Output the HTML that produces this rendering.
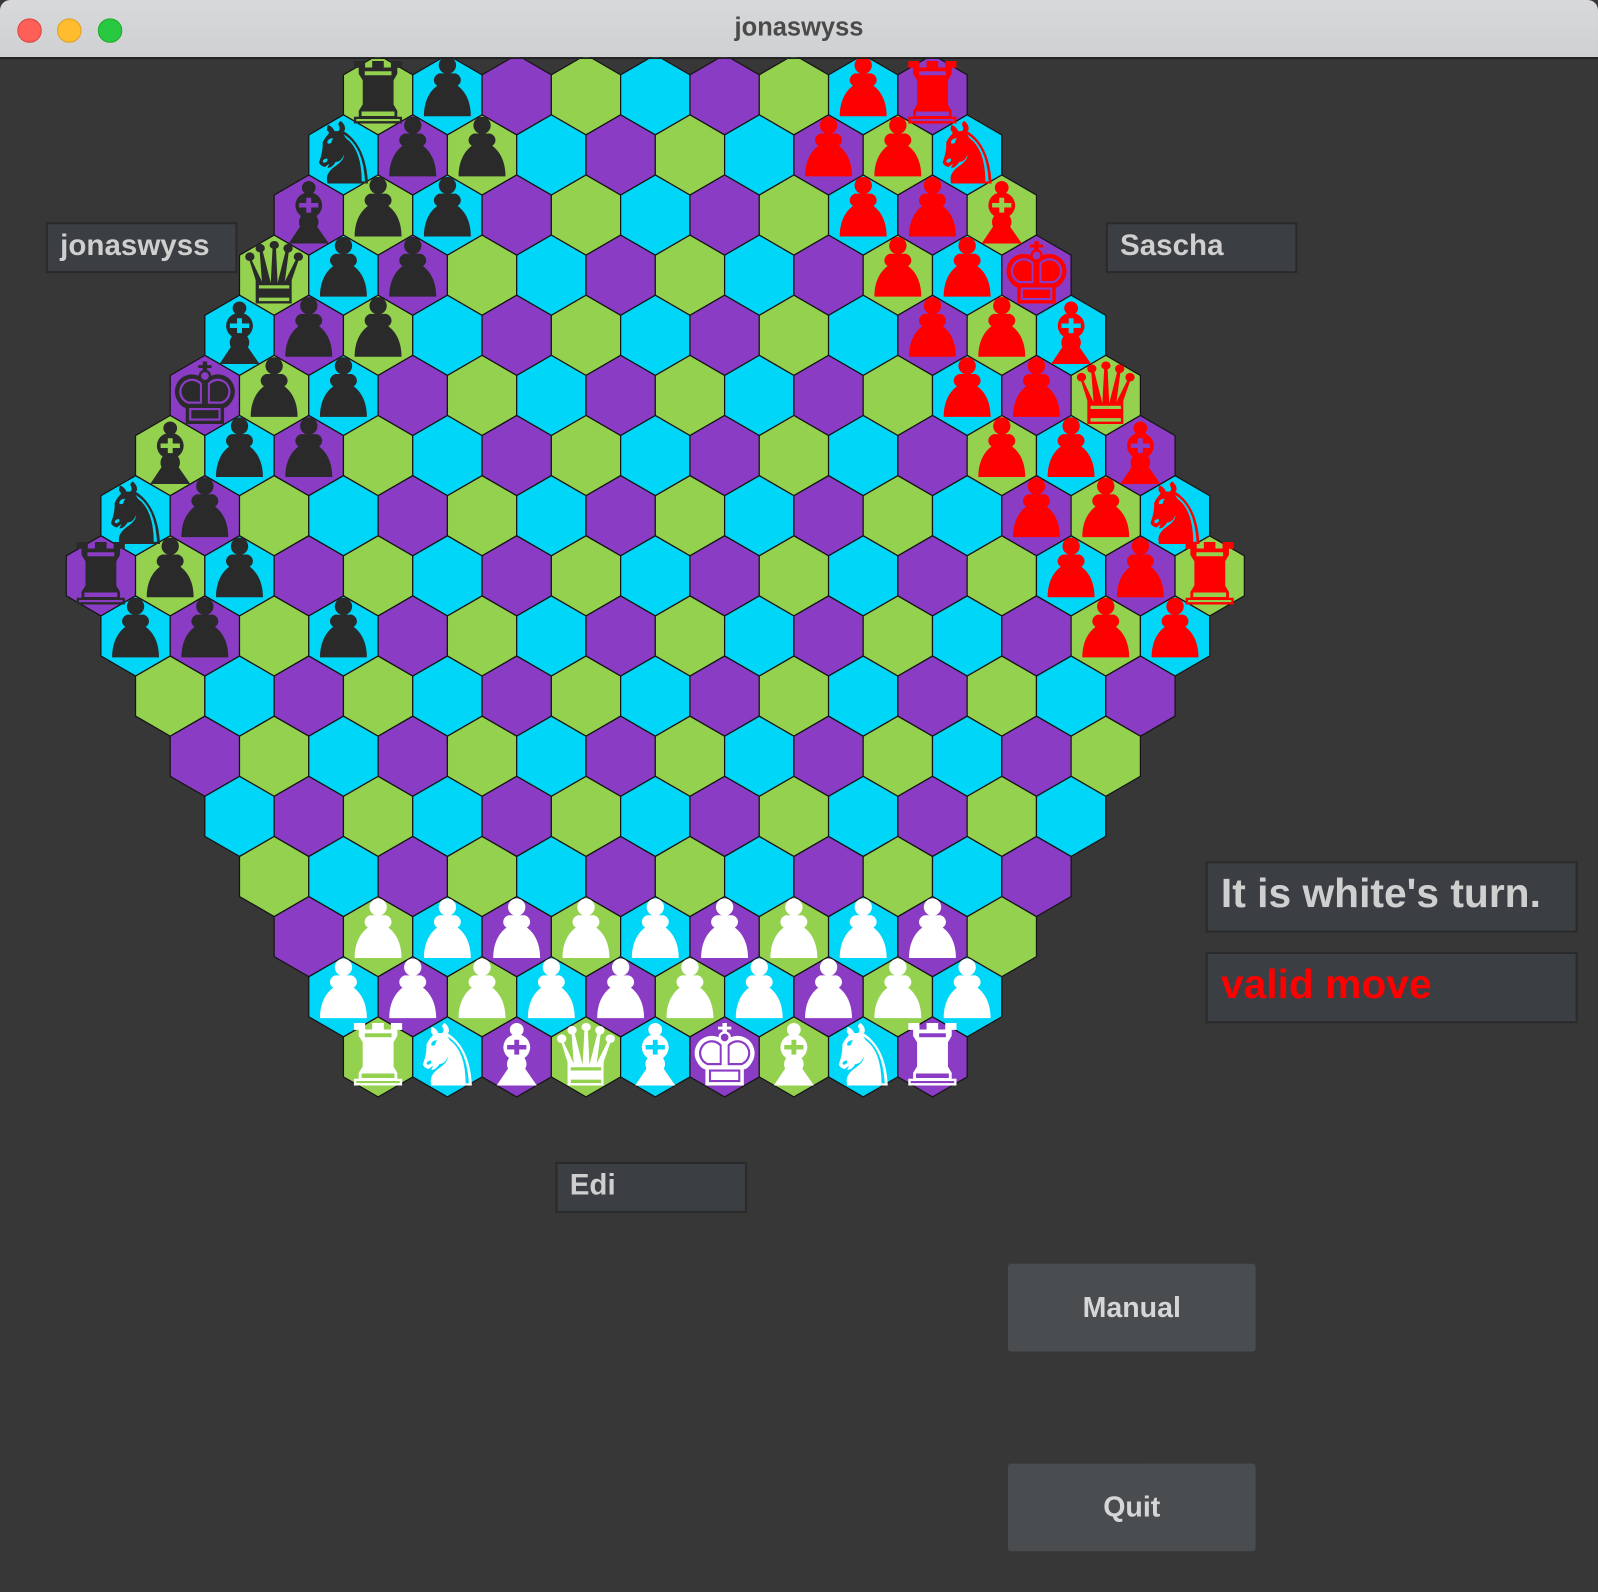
<!DOCTYPE html>
<html><head><meta charset="utf-8">
<style>
html,body{margin:0;padding:0;background:#373737;overflow:hidden;}
#wrap{position:absolute;left:0;top:0;width:1568px;height:1562px;transform-origin:0 0;transform:scale(1.01913,1.0192);background:#373737;font-family:"Liberation Sans",Arial,sans-serif;}
#title{position:absolute;left:0;top:0;width:1568px;height:56px;background:linear-gradient(#d8d9db,#cfd0d2);border-bottom:2px solid #202020;border-radius:10px 10px 0 0;}
#title .t{position:absolute;left:0;right:0;top:13px;text-align:center;font-size:25px;font-weight:bold;color:#4a4a4a;}
.dot{position:absolute;top:18px;width:24px;height:24px;border-radius:50%;}
.lbl{position:absolute;background:#3b3e42;border:2px solid #2a2a2a;box-sizing:border-box;color:#cfcfcf;font-weight:bold;}
.btn{position:absolute;background:#4a4d50;border-radius:3px;color:#d6d6d6;font-weight:bold;font-size:28px;text-align:center;}
svg{position:absolute;left:0;top:0;}
</style></head><body>
<div id="wrap">
<svg id="board" width="1568" height="1562" viewBox="0 0 1568 1562"></svg>
<div id="title"><div class="dot" style="left:17px;background:#fe5f57;border:1px solid #e0443e;width:22px;height:22px"></div><div class="dot" style="left:56px;background:#febc2e;border:1px solid #dea123;width:22px;height:22px"></div><div class="dot" style="left:96px;background:#28c840;border:1px solid #1aab29;width:22px;height:22px"></div><div class="t">jonaswyss</div></div>
<div class="lbl" style="left:45px;top:218px;width:188px;height:50px;font-size:29px;padding:5px 0 0 12px;">jonaswyss</div>
<div class="lbl" style="left:1085px;top:218px;width:188px;height:50px;font-size:29px;padding:5px 0 0 12px;">Sascha</div>
<div class="lbl" style="left:545px;top:1140px;width:188px;height:50px;font-size:29px;padding:5px 0 0 12px;">Edi</div>
<div class="lbl" style="left:1183px;top:845px;width:365px;height:70px;font-size:40px;padding:8px 0 0 13px;">It is white's turn.</div>
<div class="lbl" style="left:1183px;top:934px;width:365px;height:70px;font-size:40px;padding:8px 0 0 13px;color:#ff0000;">valid move</div>
<div class="btn" style="left:989px;top:1240px;width:243px;height:86px;line-height:86px;">Manual</div>
<div class="btn" style="left:989px;top:1436px;width:243px;height:86px;line-height:86px;">Quit</div>
</div>
<script>
(function(){
var svg=document.getElementById('board');
var cx=643,cy=565,hw=34,s=39.26,rs=59;
var cols=['#93d14f','#00d6f8','#8b3cc4'];
var out='';
function X(q){return cx+q*hw;}
function Y(r){return cy+(r-8)*rs;}
for(var r=0;r<17;r++){
 var d=Math.abs(r-8);
 for(var q=-(16-d);q<=16-d;q+=2){
  var x=X(q),y=Y(r);
  var idx=((2*q+1)%3+3)%3;
  var p=[[x,y-s],[x+hw,y-s/2],[x+hw,y+s/2],[x,y+s],[x-hw,y+s/2],[x-hw,y-s/2]].map(function(a){return a[0].toFixed(1)+','+a[1].toFixed(1)}).join(' ');
  out+='<polygon points="'+p+'" fill="'+cols[idx]+'" stroke="#151515" stroke-width="1.2"/>';
 }
}
var G={R:'\u265C',N:'\u265E',B:'\u265D',Q:'\u265B',K:'\u265A'};
var pcs=[];
function add(col,list){list.forEach(function(a){pcs.push([col,a[0],a[1],a[2]]);});}
add('#2a2a2a',[[0,-8,'R'],[0,-6,'P'],[1,-9,'N'],[1,-7,'P'],[1,-5,'P'],[2,-10,'B'],[2,-8,'P'],[2,-6,'P'],[3,-11,'Q'],[3,-9,'P'],[3,-7,'P'],[4,-12,'B'],[4,-10,'P'],[4,-8,'P'],[5,-13,'K'],[5,-11,'P'],[5,-9,'P'],[6,-14,'B'],[6,-12,'P'],[6,-10,'P'],[7,-15,'N'],[7,-13,'P'],[8,-16,'R'],[8,-14,'P'],[8,-12,'P'],[9,-15,'P'],[9,-13,'P'],[9,-9,'P']]);
add('#ff0000',[[0,6,'P'],[0,8,'R'],[1,5,'P'],[1,7,'P'],[1,9,'N'],[2,6,'P'],[2,8,'P'],[2,10,'B'],[3,7,'P'],[3,9,'P'],[3,11,'K'],[4,8,'P'],[4,10,'P'],[4,12,'B'],[5,9,'P'],[5,11,'P'],[5,13,'Q'],[6,10,'P'],[6,12,'P'],[6,14,'B'],[7,11,'P'],[7,13,'P'],[7,15,'N'],[8,12,'P'],[8,14,'P'],[8,16,'R'],[9,13,'P'],[9,15,'P']]);
var w=[];
for(var q=-8;q<=8;q+=2)w.push([14,q,'P']);
for(var q=-9;q<=9;q+=2)w.push([15,q,'P']);
'RNBQBKBNR'.split('').forEach(function(c,i){w.push([16,-8+2*i,c]);});
add('#ffffff',w);
pcs.forEach(function(p){
 var x=X(p[2]),y=Y(p[1]);
 if(p[3]=='P'){
  out+='<g transform="translate('+x.toFixed(1)+','+y.toFixed(1)+')" fill="'+p[0]+'"><circle cx="0" cy="-29" r="8.5"/><path d="M-23 21 L23 21 C23 7 18 -3 10 -9 C15 -12 14 -19 8 -21 L-8 -21 C-14 -19 -15 -12 -10 -9 C-18 -3 -23 7 -23 21 Z"/></g>';
 } else {
  out+='<text x="'+x.toFixed(1)+'" y="'+(y+28).toFixed(1)+'" text-anchor="middle" font-family="DejaVu Sans, sans-serif" font-size="84" fill="'+p[0]+'">'+G[p[3]]+'</text>';
 }
});
svg.innerHTML=out;
})();
</script>
</body></html>
